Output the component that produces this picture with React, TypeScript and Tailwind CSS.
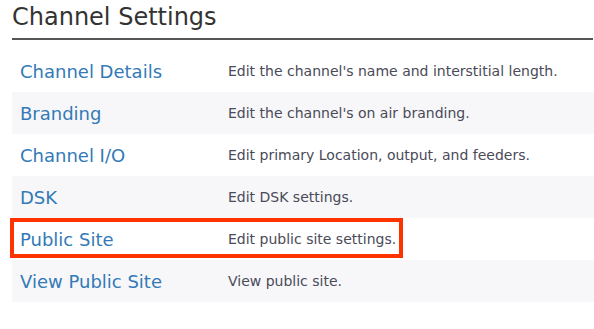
import React from "react";

const rows = [
  { name: "Channel Details", desc: "Edit the channel's name and interstitial length." },
  { name: "Branding", desc: "Edit the channel's on air branding." },
  { name: "Channel I/O", desc: "Edit primary Location, output, and feeders." },
  { name: "DSK", desc: "Edit DSK settings." },
  { name: "Public Site", desc: "Edit public site settings.", highlight: true },
  { name: "View Public Site", desc: "View public site." },
];

export default function App() {
  return (
    <div
      className="w-[594px] h-[329px] bg-white overflow-hidden pl-[12px]"
      style={{ fontFamily: '"DejaVu Sans", Verdana, sans-serif' }}
    >
      <h2 className="text-[24px] leading-[29px] text-[#333] pt-[3px] pb-[6px] border-b-[2px] border-[#555] mr-[1px]">
        Channel Settings
      </h2>
      <div className="mt-[10px]">
        {rows.map((r, i) => (
          <div
            key={r.name}
            className={`relative flex h-[42px] items-center ${i % 2 === 1 ? "bg-[#f7f7f9]" : "bg-white"}`}
          >
            <div className="w-[208px] pl-[8px] text-[18px] text-[#337ab7]">{r.name}</div>
            <div className="pl-[8px] text-[14px] text-[#4a4a58]">{r.desc}</div>
            {r.highlight && (
              <div className="absolute left-[-2px] top-0 w-[393px] h-[40px] border-[4px] border-[#ff3300]" />
            )}
          </div>
        ))}
      </div>
    </div>
  );
}
